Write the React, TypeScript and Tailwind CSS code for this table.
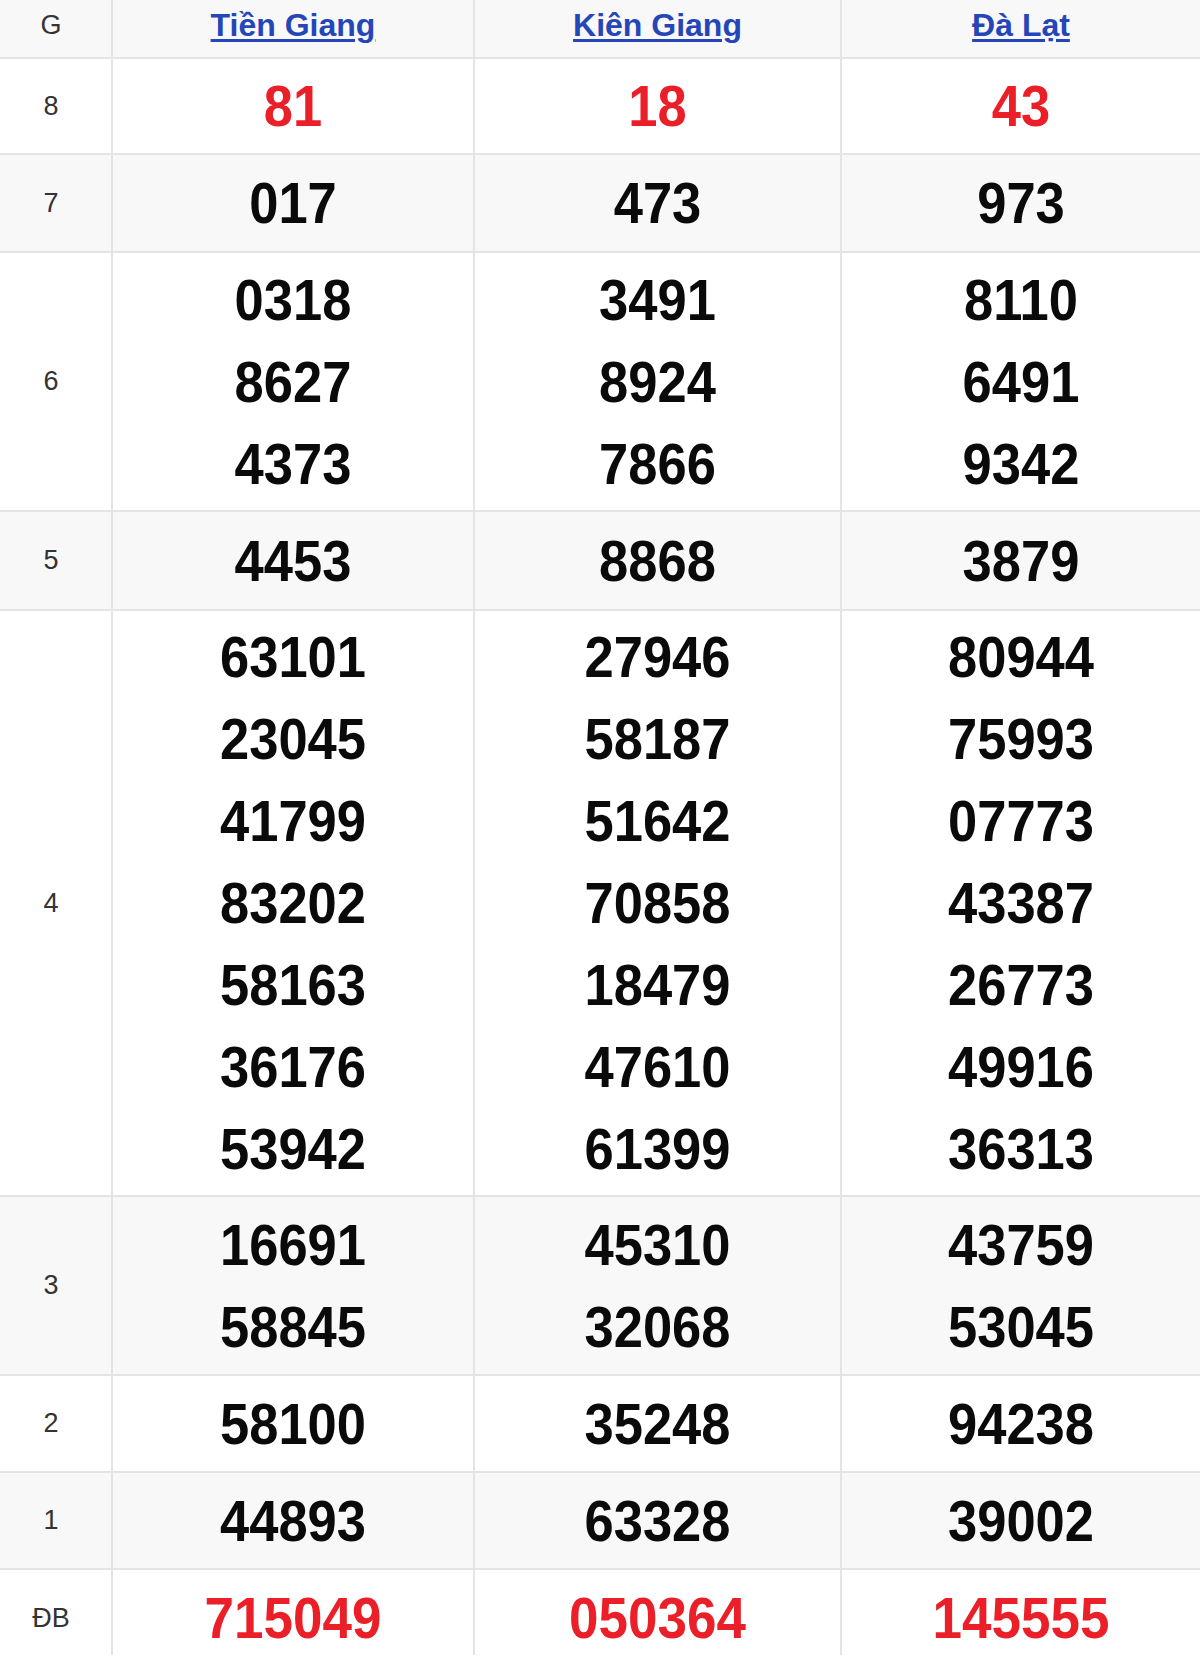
import React from 'react';

interface PrizeRow {
  label: string;
  height: string;
  values: string[][];
  red?: boolean;
  special?: boolean;
}

const provinces = ['Tiền Giang', 'Kiên Giang', 'Đà Lạt'];

// row heights measured off the source page
const rows: PrizeRow[] = [
  { label: '8', height: 'h-[96px]', values: [['81'], ['18'], ['43']], red: true },
  { label: '7', height: 'h-[98px]', values: [['017'], ['473'], ['973']] },
  {
    label: '6',
    height: 'h-[259px]',
    values: [
      ['0318', '8627', '4373'],
      ['3491', '8924', '7866'],
      ['8110', '6491', '9342'],
    ],
  },
  { label: '5', height: 'h-[99px]', values: [['4453'], ['8868'], ['3879']] },
  {
    label: '4',
    height: 'h-[586px]',
    values: [
      ['63101', '23045', '41799', '83202', '58163', '36176', '53942'],
      ['27946', '58187', '51642', '70858', '18479', '47610', '61399'],
      ['80944', '75993', '07773', '43387', '26773', '49916', '36313'],
    ],
  },
  {
    label: '3',
    height: 'h-[179px]',
    values: [
      ['16691', '58845'],
      ['45310', '32068'],
      ['43759', '53045'],
    ],
  },
  { label: '2', height: 'h-[97px]', values: [['58100'], ['35248'], ['94238']] },
  { label: '1', height: 'h-[97px]', values: [['44893'], ['63328'], ['39002']] },
  { label: 'ĐB', height: 'h-[85px]', values: [['715049'], ['050364'], ['145555']], red: true, special: true },
];

const colWidths = ['w-[362px]', 'w-[367px]', 'flex-1'];

export default function App() {
  return (
    <div className="w-[1200px] bg-white font-['Liberation_Sans',Arial,sans-serif]">
      {/* header */}
      <div className="flex h-[59px] border-b-2 border-[#e4e4e4] bg-[#f8f8f8]">
        <div className="w-[113px] shrink-0 border-r-2 border-[#e4e4e4] flex items-center justify-center pr-[9px] pb-[7px] text-[27px] text-[#333]">
          G
        </div>
        {provinces.map((p, i) => (
          <div
            key={p}
            className={`${colWidths[i]} shrink-0 ${i < 2 ? 'border-r-2 border-[#e4e4e4]' : ''} flex items-center justify-center pb-[7px]`}
          >
            <a href="#" className="text-[32px] font-bold text-[#2546b8] underline underline-offset-[3px]">
              {p}
            </a>
          </div>
        ))}
      </div>

      {rows.map((row, i) => (
        <div
          key={row.label}
          className={`flex ${row.height} ${row.special ? '' : 'border-b-2 border-[#e4e4e4]'} ${
            i % 2 === 1 ? 'bg-[#f8f8f8]' : 'bg-white'
          }`}
        >
          <div
            className={`w-[113px] shrink-0 border-r-2 border-[#e4e4e4] flex justify-center pr-[9px] text-[27px] text-[#333] ${
              row.special ? 'items-start pt-[7px] leading-[82px]' : 'items-center'
            }`}
          >
            {row.label}
          </div>
          {row.values.map((col, j) => (
            <div
              key={j}
              className={`${colWidths[j]} shrink-0 ${j < 2 ? 'border-r-2 border-[#e4e4e4]' : ''} flex flex-col items-center ${
                row.special ? 'justify-start pt-[7px]' : 'justify-center'
              }`}
            >
              {col.map((n, k) => (
                <div
                  key={k}
                  className={`leading-[82px] font-bold scale-y-[1.1] ${row.special ? 'text-[53px]' : 'text-[52.5px]'} ${
                    row.red ? 'text-[#ea1f28]' : 'text-[#0a0a0a]'
                  }`}
                >
                  {n}
                </div>
              ))}
            </div>
          ))}
        </div>
      ))}
    </div>
  );
}
